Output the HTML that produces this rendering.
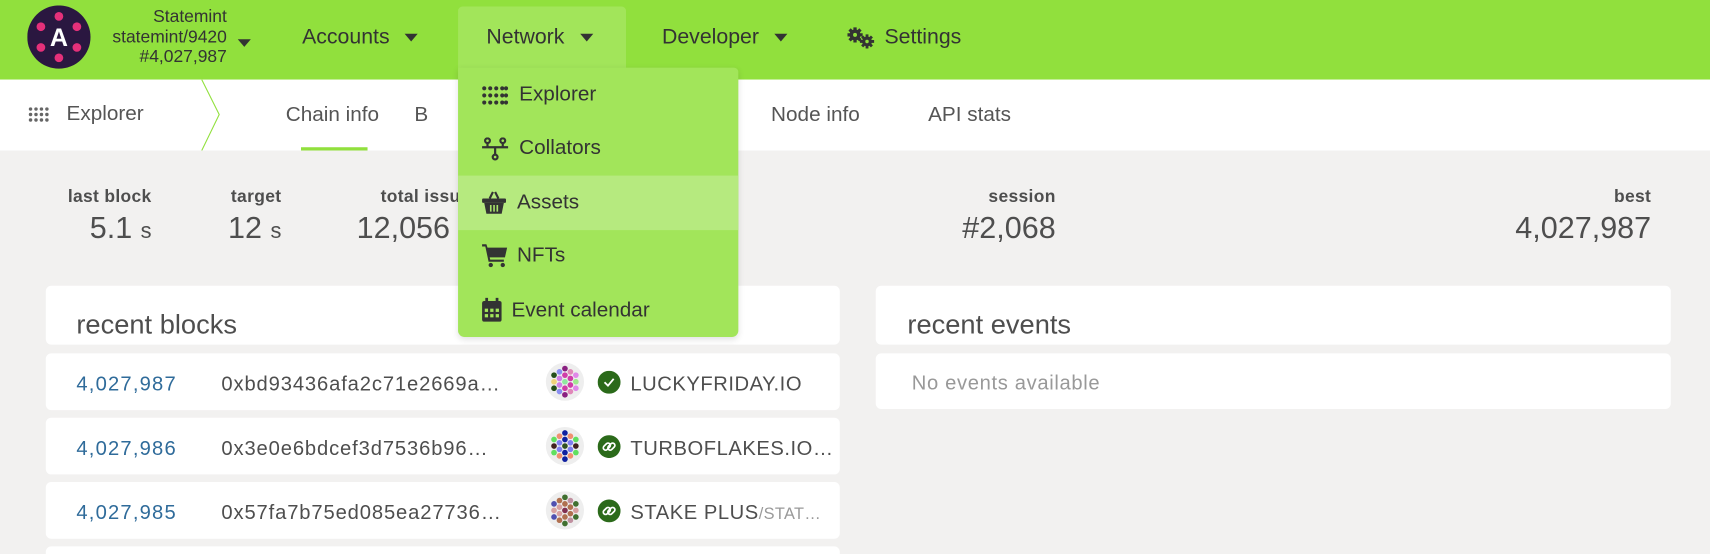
<!DOCTYPE html>
<html><head><meta charset="utf-8"><style>
*{margin:0;padding:0;box-sizing:border-box}
html,body{width:1710px;height:554px;overflow:hidden;background:#f2f1f0;font-family:"Liberation Sans",sans-serif}
#w{width:1568px;height:508px;overflow:hidden;position:relative;transform:scale(1.0906);transform-origin:0 0;color:#4e4e4e}
.a{position:absolute;white-space:nowrap}
#hd{position:absolute;left:0;top:0;width:1568px;height:73px;background:#91e03d}
.nav{font-size:19.5px;color:#333}
.car{display:inline-block;width:0;height:0;border-left:6px solid transparent;border-right:6px solid transparent;border-top:7px solid #333;vertical-align:middle;margin-left:14px}
#sub{position:absolute;left:0;top:73px;width:1568px;height:65px;background:#fff}
.lab{font-size:16px;font-weight:bold;color:#4e4e4e;text-align:right;letter-spacing:.3px}
.val{font-size:28px;color:#4e4e4e;text-align:right}
.card{position:absolute;background:#fff;border-radius:5px}
.row{font-size:18.5px;letter-spacing:.8px}
.nm{letter-spacing:.5px}
.dd{font-size:19px;color:#333}
</style></head><body><div id="w">
<div id="hd"></div>
<svg class="a" style="left:25px;top:5px" width="58" height="58" viewBox="0 0 58 58">
<circle cx="29" cy="29" r="29" fill="#2a1740"/>
<g fill="#e5307a"><circle cx="29" cy="10" r="4"/><circle cx="29" cy="48" r="4"/><circle cx="12.5" cy="19.5" r="4"/><circle cx="45.5" cy="19.5" r="4"/><circle cx="12.5" cy="38.5" r="4"/><circle cx="45.5" cy="38.5" r="4"/></g>
<text x="29" y="37" font-size="23" font-weight="bold" fill="#fff" text-anchor="middle" font-family="Liberation Sans">A</text></svg>
<div class="a" style="right:1360px;top:7px;font-size:16px;color:#333;text-align:right;line-height:18.5px">Statemint<br>statemint/9420<br>#4,027,987</div>
<div class="a" style="left:218px;top:31px"><span class="car" style="margin:0"></span></div>
<div class="a nav" style="left:277px;top:23px">Accounts<span class="car"></span></div>
<div class="a" style="left:420px;top:6px;width:154px;height:70px;background:#a2e55a;border-radius:4px 4px 0 0"></div>
<div class="a nav" style="left:446px;top:23px">Network<span class="car"></span></div>
<div class="a nav" style="left:607px;top:23px">Developer<span class="car"></span></div>
<svg class="a" style="left:777px;top:25px" width="26" height="20" viewBox="0 0 26 20" fill="#333"><circle cx="7" cy="7" r="5"/><g stroke="#333" stroke-width="3"><line x1="7" y1="0" x2="7" y2="14"/><line x1="0" y1="7" x2="14" y2="7"/><line x1="2" y1="2" x2="12" y2="12"/><line x1="12" y1="2" x2="2" y2="12"/></g><circle cx="7" cy="7" r="1.8" fill="#91e03d"/><circle cx="18" cy="13" r="4.5"/><g stroke="#333" stroke-width="2.6"><line x1="18" y1="6.5" x2="18" y2="19.5"/><line x1="11.5" y1="13" x2="24.5" y2="13"/><line x1="13.5" y1="8.5" x2="22.5" y2="17.5"/><line x1="22.5" y1="8.5" x2="13.5" y2="17.5"/></g><circle cx="18" cy="13" r="1.6" fill="#91e03d"/></svg>
<div class="a nav" style="left:811px;top:23px">Settings</div>

<div id="sub"></div>
<svg class="a" style="left:26px;top:98px" width="20" height="14" viewBox="0 0 20 14" fill="#666"><g id="r"><circle cx="2" cy="2" r="1.6"/><circle cx="7" cy="2" r="1.6"/><circle cx="12" cy="2" r="1.6"/><circle cx="17" cy="2" r="1.6"/></g><use href="#r" y="5"/><use href="#r" y="10"/></svg>
<div class="a" style="left:61px;top:94px;font-size:19px;color:#555">Explorer</div>
<svg class="a" style="left:183px;top:73px" width="20" height="65"><polyline points="2,0 18,32 2,65" fill="none" stroke="#91e03d" stroke-width="1"/></svg>
<div class="a" style="left:262px;top:95px;font-size:19px;color:#555">Chain info</div>
<div class="a" style="left:276px;top:135px;width:61px;height:3px;background:#91e03d"></div>
<div class="a" style="left:380px;top:95px;font-size:19px;color:#555">B</div>
<div class="a" style="left:707px;top:95px;font-size:19px;color:#555">Node info</div>
<div class="a" style="left:851px;top:95px;font-size:19px;color:#555">API stats</div>

<div class="a lab" style="right:1429px;top:172px">last block</div>
<div class="a val" style="right:1429px;top:193px">5.1 <span style="font-size:20px">s</span></div>
<div class="a lab" style="right:1310px;top:172px">target</div>
<div class="a val" style="right:1310px;top:193px">12 <span style="font-size:20px">s</span></div>
<div class="a lab" style="left:349px;top:172px">total issu</div>
<div class="a val" style="left:327px;top:193px;text-align:left">12,056</div>
<div class="a lab" style="right:600px;top:172px">session</div>
<div class="a val" style="right:600px;top:193px">#2,068</div>
<div class="a lab" style="right:54px;top:172px">best</div>
<div class="a val" style="right:54px;top:193px">4,027,987</div>

<div class="card" style="left:42px;top:262px;width:728px;height:54px"></div>
<div class="a" style="left:70px;top:284px;font-size:25px;color:#4e4e4e">recent blocks</div>
<div class="card" style="left:803px;top:262px;width:729px;height:54px"></div>
<div class="a" style="left:832px;top:284px;font-size:25px;color:#4e4e4e">recent events</div>
<div class="card" style="left:803px;top:324px;width:729px;height:51px"></div>
<div class="a row" style="left:836px;top:340px;color:#999;letter-spacing:.6px">No events available</div>

<div class="card" style="left:42px;top:324px;width:728px;height:52px"></div>
<div class="card" style="left:42px;top:383px;width:728px;height:52px"></div>
<div class="card" style="left:42px;top:442px;width:728px;height:52px"></div>
<div class="card" style="left:42px;top:501px;width:728px;height:52px"></div>

<div class="a row" style="left:70px;top:341px;color:#2f6b9a;letter-spacing:1.1px">4,027,987</div>
<div class="a row" style="left:203px;top:341px">0xbd93436afa2c71e2669a…</div>
<div class="a row" style="left:70px;top:400px;color:#2f6b9a;letter-spacing:1.1px">4,027,986</div>
<div class="a row" style="left:203px;top:400px">0x3e0e6bdcef3d7536b96…</div>
<div class="a row" style="left:70px;top:459px;color:#2f6b9a;letter-spacing:1.1px">4,027,985</div>
<div class="a row" style="left:203px;top:459px">0x57fa7b75ed085ea27736…</div>

<svg class="a" style="left:500px;top:332px" width="36" height="36" viewBox="-18 -18 36 36"><circle r="17.5" fill="#eee"/><g><circle cx="-10" cy="-6" r="2.6" fill="#234d1a"/><circle cx="-10" cy="0" r="2.6" fill="#f0d27a"/><circle cx="-10" cy="6" r="2.6" fill="#234d1a"/><circle cx="-5" cy="-9" r="2.6" fill="#8a8ef0"/><circle cx="-5" cy="-3" r="2.6" fill="#d07ee8"/><circle cx="-5" cy="3" r="2.6" fill="#d07ee8"/><circle cx="-5" cy="9" r="2.6" fill="#8a8ef0"/><circle cx="0" cy="-12" r="2.6" fill="#8a2080"/><circle cx="0" cy="-6" r="2.6" fill="#d03ca8"/><circle cx="0" cy="0" r="2.6" fill="#90e8a0"/><circle cx="0" cy="6" r="2.6" fill="#d03ca8"/><circle cx="0" cy="12" r="2.6" fill="#8a2080"/><circle cx="5" cy="-9" r="2.6" fill="#e088b8"/><circle cx="5" cy="-3" r="2.6" fill="#d03ca8"/><circle cx="5" cy="3" r="2.6" fill="#d03ca8"/><circle cx="5" cy="9" r="2.6" fill="#e088b8"/><circle cx="10" cy="-6" r="2.6" fill="#e088e8"/><circle cx="10" cy="0" r="2.6" fill="#a0e890"/><circle cx="10" cy="6" r="2.6" fill="#e088e8"/></g></svg>
<svg class="a" style="left:500px;top:391px" width="36" height="36" viewBox="-18 -18 36 36"><circle r="17.5" fill="#eee"/><g><circle cx="-10" cy="-6" r="2.6" fill="#60e060"/><circle cx="-10" cy="0" r="2.6" fill="#402020"/><circle cx="-10" cy="6" r="2.6" fill="#60e060"/><circle cx="-5" cy="-9" r="2.6" fill="#f09070"/><circle cx="-5" cy="-3" r="2.6" fill="#8080f0"/><circle cx="-5" cy="3" r="2.6" fill="#8080f0"/><circle cx="-5" cy="9" r="2.6" fill="#f09070"/><circle cx="0" cy="-12" r="2.6" fill="#1020a0"/><circle cx="0" cy="-6" r="2.6" fill="#1020a0"/><circle cx="0" cy="0" r="2.6" fill="#305020"/><circle cx="0" cy="6" r="2.6" fill="#1020a0"/><circle cx="0" cy="12" r="2.6" fill="#1020a0"/><circle cx="5" cy="-9" r="2.6" fill="#f09070"/><circle cx="5" cy="-3" r="2.6" fill="#8080f0"/><circle cx="5" cy="3" r="2.6" fill="#8080f0"/><circle cx="5" cy="9" r="2.6" fill="#f09070"/><circle cx="10" cy="-6" r="2.6" fill="#60e060"/><circle cx="10" cy="0" r="2.6" fill="#402020"/><circle cx="10" cy="6" r="2.6" fill="#60e060"/></g></svg>
<svg class="a" style="left:500px;top:450px" width="36" height="36" viewBox="-18 -18 36 36"><circle r="17.5" fill="#eee"/><g><circle cx="-10" cy="-6" r="2.6" fill="#5050b0"/><circle cx="-10" cy="0" r="2.6" fill="#d8a0a0"/><circle cx="-10" cy="6" r="2.6" fill="#5050b0"/><circle cx="-5" cy="-9" r="2.6" fill="#b07050"/><circle cx="-5" cy="-3" r="2.6" fill="#d8a0a0"/><circle cx="-5" cy="3" r="2.6" fill="#d8a0a0"/><circle cx="-5" cy="9" r="2.6" fill="#b07050"/><circle cx="0" cy="-12" r="2.6" fill="#407030"/><circle cx="0" cy="-6" r="2.6" fill="#b07050"/><circle cx="0" cy="0" r="2.6" fill="#803050"/><circle cx="0" cy="6" r="2.6" fill="#b07050"/><circle cx="0" cy="12" r="2.6" fill="#407030"/><circle cx="5" cy="-9" r="2.6" fill="#c090a0"/><circle cx="5" cy="-3" r="2.6" fill="#b07050"/><circle cx="5" cy="3" r="2.6" fill="#b07050"/><circle cx="5" cy="9" r="2.6" fill="#c090a0"/><circle cx="10" cy="-6" r="2.6" fill="#407030"/><circle cx="10" cy="0" r="2.6" fill="#d8a0a0"/><circle cx="10" cy="6" r="2.6" fill="#407030"/></g></svg>

<svg class="a" style="left:548px;top:340px" width="21" height="21" viewBox="0 0 20 20"><circle cx="10" cy="10" r="10" fill="#2b6a1a"/><polyline points="6,10 9,13 14,7" fill="none" stroke="#fff" stroke-width="1.6"/></svg>
<svg class="a" style="left:548px;top:399px" width="21" height="21" viewBox="0 0 20 20"><circle cx="10" cy="10" r="10" fill="#2b6a1a"/><g fill="none" stroke="#fff" stroke-width="1.5"><rect x="4.5" y="8" width="7" height="4" rx="2" transform="rotate(-45 8 10)"/><rect x="8.5" y="8" width="7" height="4" rx="2" transform="rotate(-45 12 10)"/></g></svg>
<svg class="a" style="left:548px;top:458px" width="21" height="21" viewBox="0 0 20 20"><circle cx="10" cy="10" r="10" fill="#2b6a1a"/><g fill="none" stroke="#fff" stroke-width="1.5"><rect x="4.5" y="8" width="7" height="4" rx="2" transform="rotate(-45 8 10)"/><rect x="8.5" y="8" width="7" height="4" rx="2" transform="rotate(-45 12 10)"/></g></svg>
<div class="a row nm" style="left:578px;top:341px">LUCKYFRIDAY.IO</div>
<div class="a row nm" style="left:578px;top:400px">TURBOFLAKES.IO…</div>
<div class="a row nm" style="left:578px;top:459px">STAKE PLUS<span style="font-size:15px;color:#999;letter-spacing:.3px">/STAT…</span></div>

<div class="a" style="left:420px;top:62px;width:257px;height:247px;background:#a2e55a;border-radius:0 4px 6px 6px;box-shadow:0 2px 6px rgba(0,0,0,.12)"></div>
<div class="a" style="left:420px;top:161px;width:257px;height:50px;background:#b6ea7f"></div>
<svg class="a" style="left:442px;top:79px" width="24" height="17" viewBox="0 0 24 17" fill="#333"><g id="d"><circle cx="2" cy="2" r="1.9"/><circle cx="7.5" cy="2" r="1.9"/><circle cx="13" cy="2" r="1.9"/><circle cx="18.5" cy="2" r="1.9"/><circle cx="22" cy="2" r="1.9"/></g><use href="#d" y="6.5"/><use href="#d" y="13"/></svg>
<div class="a dd" style="left:476px;top:76px">Explorer</div>
<svg class="a" style="left:442px;top:126px" width="24" height="22" viewBox="0 0 24 22" fill="none" stroke="#333" stroke-width="2"><line x1="0" y1="9" x2="24" y2="9"/><circle cx="5" cy="3" r="2.2"/><circle cx="19" cy="3" r="2.2"/><line x1="5" y1="5" x2="5" y2="9"/><line x1="19" y1="5" x2="19" y2="9"/><line x1="12" y1="9" x2="12" y2="16"/><circle cx="12" cy="18" r="2.2"/></svg>
<div class="a dd" style="left:476px;top:125px">Collators</div>
<svg class="a" style="left:442px;top:175px" width="22" height="22" viewBox="0 0 22 22" fill="#333"><path d="M7 7 L10 1 M15 7 L12 1" stroke="#333" stroke-width="2" fill="none"/><rect x="0" y="7" width="22" height="4" rx="1"/><path d="M2 11 H20 L18 21 H4 Z"/><g stroke="#a8e36b" stroke-width="1.5"><line x1="8" y1="13" x2="8" y2="19"/><line x1="11" y1="13" x2="11" y2="19"/><line x1="14" y1="13" x2="14" y2="19"/></g></svg>
<div class="a dd" style="left:474px;top:175px">Assets</div>
<svg class="a" style="left:442px;top:223px" width="24" height="22" viewBox="0 0 24 22" fill="#333"><path d="M0 1 H4 L5 4 H23 L21 13 H7 L7.5 15 H20 V17 H6 L3 3 H0 Z"/><circle cx="8" cy="20" r="2"/><circle cx="19" cy="20" r="2"/></svg>
<div class="a dd" style="left:474px;top:224px">NFTs</div>
<svg class="a" style="left:442px;top:273px" width="18" height="22" viewBox="0 0 18 22" fill="#333"><rect x="3" y="0" width="2.5" height="5"/><rect x="12.5" y="0" width="2.5" height="5"/><rect x="0" y="3" width="18" height="19" rx="2"/><g fill="#a2e55a"><rect x="2.5" y="10" width="3" height="3"/><rect x="7.5" y="10" width="3" height="3"/><rect x="12.5" y="10" width="3" height="3"/><rect x="2.5" y="15" width="3" height="3"/><rect x="7.5" y="15" width="3" height="3"/><rect x="12.5" y="15" width="3" height="3"/></g></svg>
<div class="a dd" style="left:469px;top:274px">Event calendar</div>
</div></body></html>
